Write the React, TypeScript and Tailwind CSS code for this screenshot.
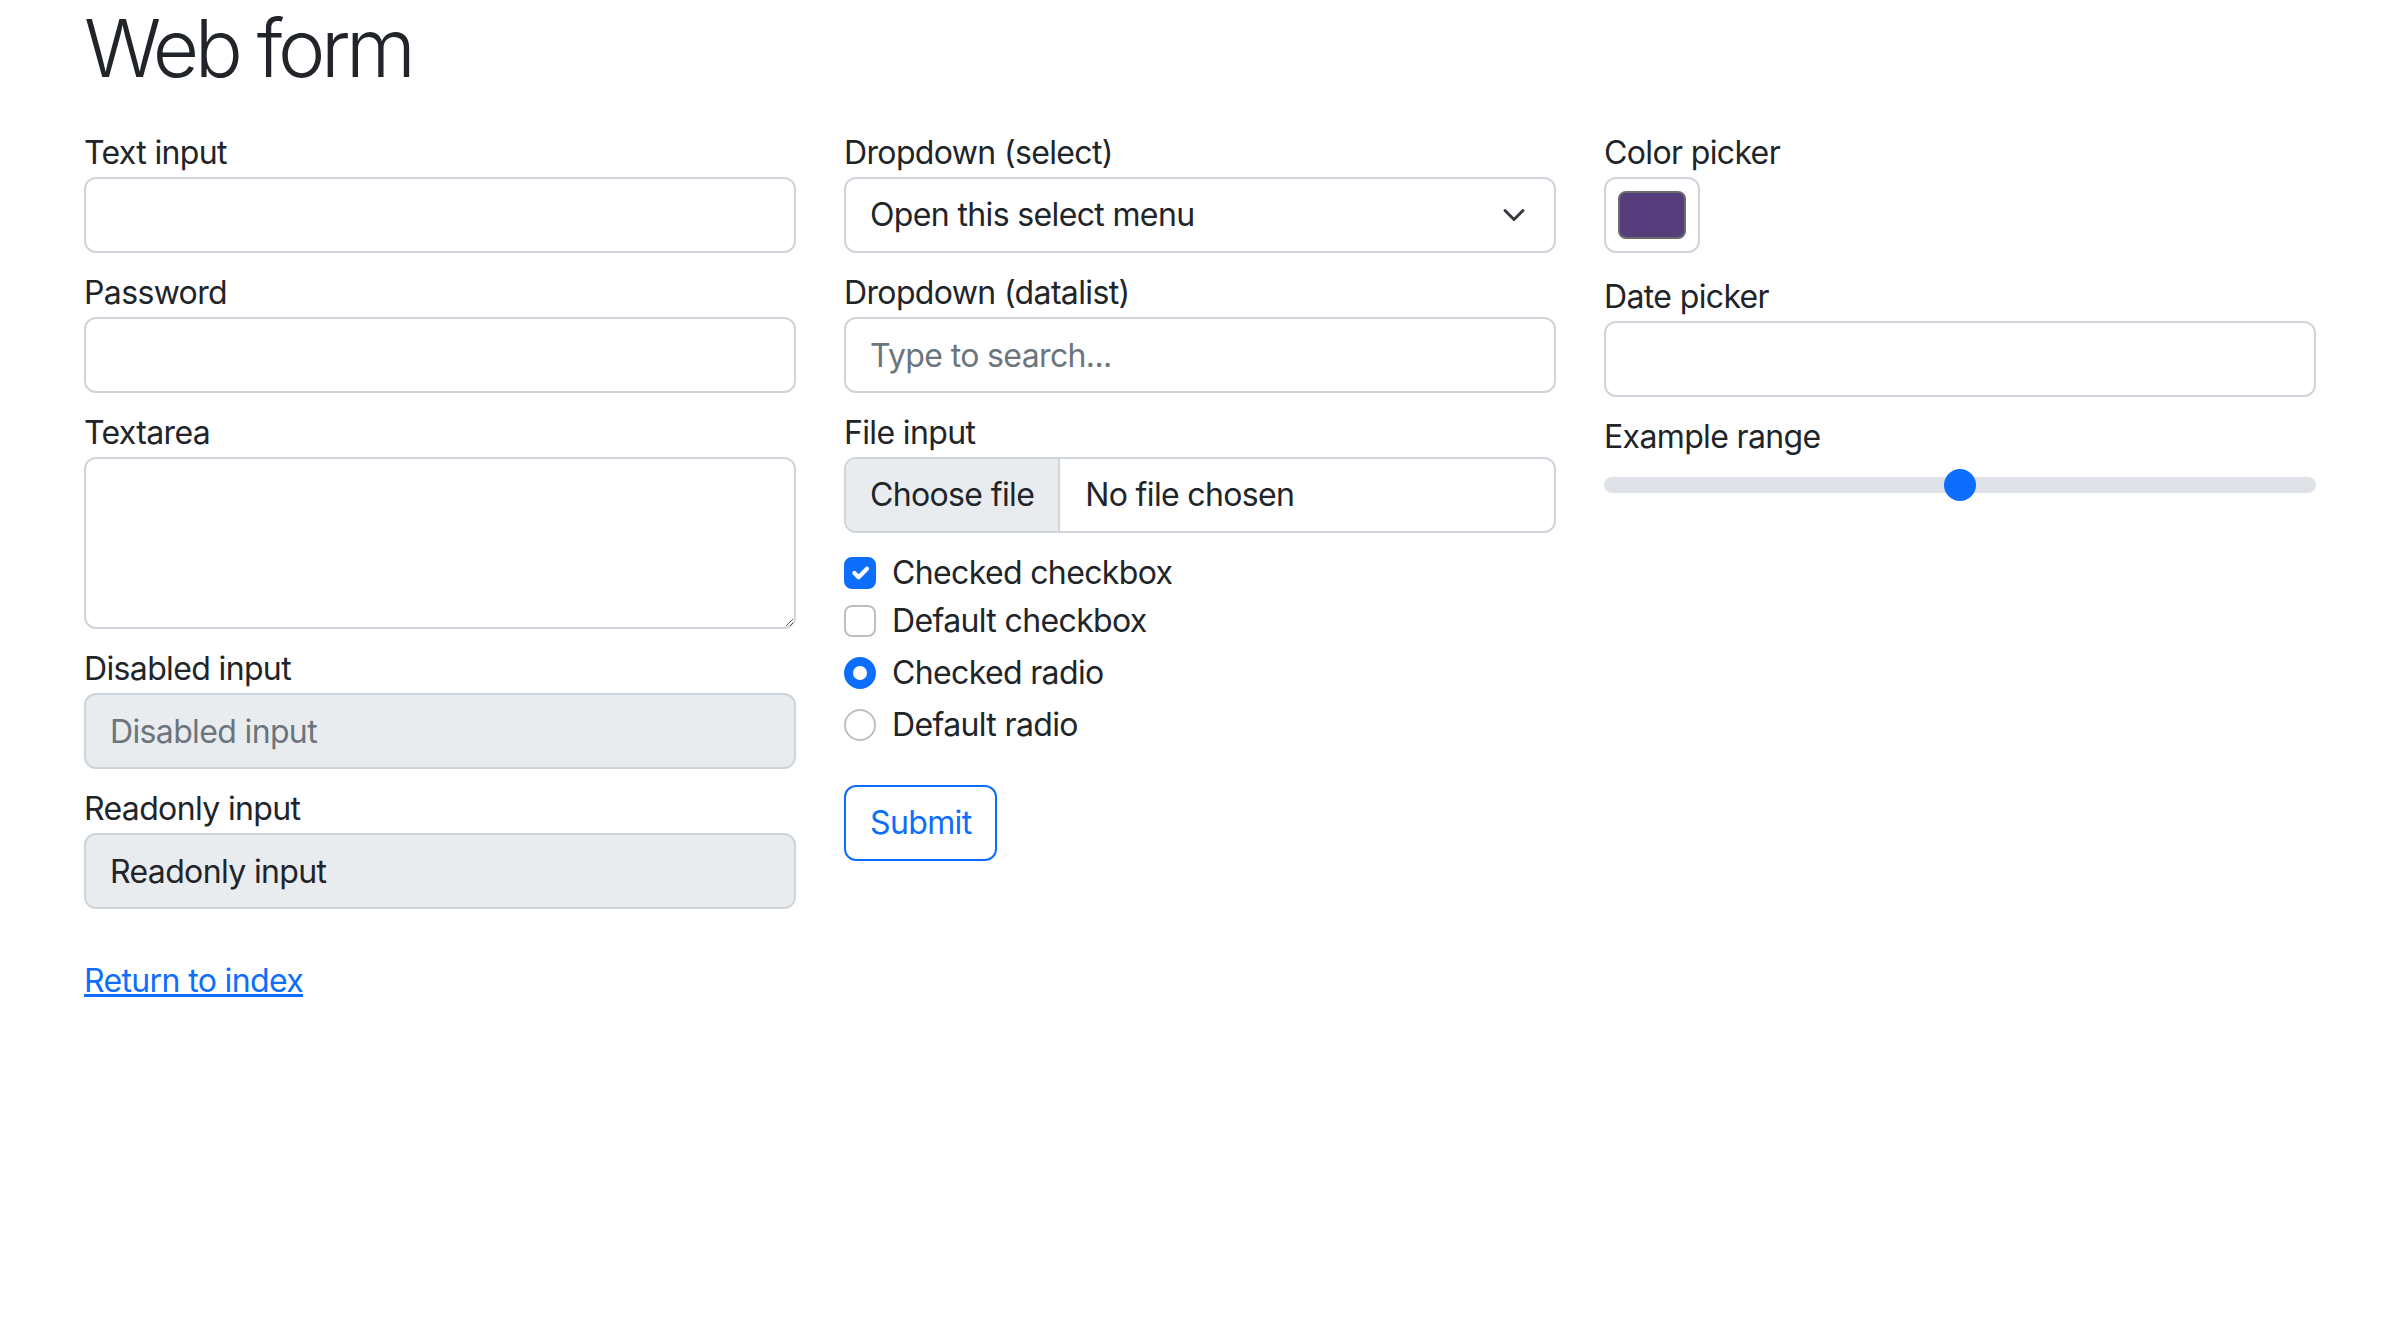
import { type FC } from "react";

const baseCls =
  "block w-full h-[76px] px-[24px] py-[12px] border-2 border-[#ced4da] rounded-[12px] text-[32px] leading-[48px] text-[#212529] outline-none placeholder:text-[#6c757d]";
const inputCls = baseCls + " bg-white";
const greyCls = baseCls + " bg-[#e9ecef]";

const Field: FC<{ label: string; children: React.ReactNode; className?: string }> = ({ label, children, className }) => (
  <label className={"block w-full mb-[16px] " + (className ?? "")}>
    <span className="block h-[48px]">{label}</span>
    {children}
  </label>
);

const Check: FC<{ label: string; checked?: boolean }> = ({ label, checked }) => (
  <div className="flex items-start h-[48px]">
    <span
      className={
        "mt-[8px] w-[32px] h-[32px] shrink-0 rounded-[8px] border-2 flex items-center justify-center " +
        (checked ? "bg-[#0d6efd] border-[#0d6efd]" : "bg-white border-[#bfbfbf]")
      }
    >
      {checked && (
        <svg viewBox="0 0 20 20" className="w-[28px] h-[28px]">
          <path d="m6 10 3 3 6-6" fill="none" stroke="#fff" strokeWidth="3" strokeLinecap="round" strokeLinejoin="round" />
        </svg>
      )}
    </span>
    <span className="ml-[16px]">{label}</span>
  </div>
);

const Radio: FC<{ label: string; checked?: boolean }> = ({ label, checked }) => (
  <div className="flex items-start h-[48px]">
    <span
      className={
        "mt-[8px] w-[32px] h-[32px] shrink-0 rounded-full border-2 flex items-center justify-center " +
        (checked ? "bg-[#0d6efd] border-[#0d6efd]" : "bg-white border-[#bfbfbf]")
      }
    >
      {checked && <span className="w-[14px] h-[14px] rounded-full bg-white" />}
    </span>
    <span className="ml-[16px]">{label}</span>
  </div>
);

export default function App() {
  return (
    <div
      className="min-h-screen bg-white text-[#212529] text-[32px] leading-[48px] tracking-[-0.02em]"
      style={{ fontFamily: "Inter, 'Noto Sans', sans-serif" }}
    >
      <div className="w-[2280px] mx-auto px-[24px]">
        <h1 className="text-[80px] leading-[96px] font-light tracking-[-0.055em] mb-[33px]">Web form</h1>

        <form className="grid grid-cols-3 gap-x-[48px] items-start" onSubmit={(e) => e.preventDefault()}>
          {/* column 1 */}
          <div className="flex flex-col">
            <Field label="Text input">
              <input type="text" className={inputCls} />
            </Field>
            <Field label="Password">
              <input type="password" className={inputCls} />
            </Field>
            <Field label="Textarea">
              <textarea rows={3} className={inputCls + " h-[172px] resize-y"} />
            </Field>
            <Field label="Disabled input">
              <input type="text" disabled placeholder="Disabled input" className={greyCls} />
            </Field>
            <Field label="Readonly input">
              <input type="text" readOnly defaultValue="Readonly input" className={greyCls} />
            </Field>
          </div>

          {/* column 2 */}
          <div className="flex flex-col">
            <Field label="Dropdown (select)">
              <div className={inputCls + " flex items-center justify-between"}>
                <span>Open this select menu</span>
                <svg viewBox="0 0 16 16" className="w-[32px] h-[24px] shrink-0">
                  <path d="m2 5 6 6 6-6" fill="none" stroke="#343a40" strokeWidth="2" strokeLinecap="round" strokeLinejoin="round" />
                </svg>
              </div>
            </Field>
            <Field label="Dropdown (datalist)">
              <input type="text" placeholder="Type to search..." className={inputCls} />
            </Field>
            <Field label="File input">
              <div className="flex w-full h-[76px] border-2 border-[#ced4da] rounded-[12px] overflow-hidden bg-white">
                <span className="flex items-center px-[24px] bg-[#e9ecef] border-r-2 border-[#ced4da]">Choose file</span>
                <span className="flex items-center pl-[25px]">No file chosen</span>
              </div>
            </Field>
            <div className="flex flex-col">
              <Check label="Checked checkbox" checked />
              <Check label="Default checkbox" />
            </div>
            <div className="flex flex-col gap-[4px] mt-[4px]">
              <Radio label="Checked radio" checked />
              <Radio label="Default radio" />
            </div>
            <div className="mt-[36px]">
              <button
                type="submit"
                className="h-[76px] px-[24px] border-2 border-[#0d6efd] rounded-[12px] text-[#0d6efd] bg-white"
              >
                Submit
              </button>
            </div>
          </div>

          {/* column 3 */}
          <div className="flex flex-col">
            <Field label="Color picker" className="mb-[20px]">
              <div className="w-[96px] h-[76px] p-[12px] border-2 border-[#ced4da] rounded-[12px] bg-white">
                <div className="w-full h-full rounded-[8px] bg-[#563d7c] border-2 border-[#6b6b6b]" />
              </div>
            </Field>
            <Field label="Date picker">
              <input type="text" className={inputCls} />
            </Field>
            <Field label="Example range">
              <div className="h-[48px] flex items-center">
                <div className="w-full h-[16px] rounded-full bg-[#dee2e6] flex items-center justify-center">
                  <div className="w-[32px] h-[32px] shrink-0 rounded-full bg-[#0d6efd]" />
                </div>
              </div>
            </Field>
          </div>
        </form>

        <div className="mt-[32px]">
          <a href="#" className="text-[#0d6efd] underline">
            Return to index
          </a>
        </div>
      </div>
    </div>
  );
}
